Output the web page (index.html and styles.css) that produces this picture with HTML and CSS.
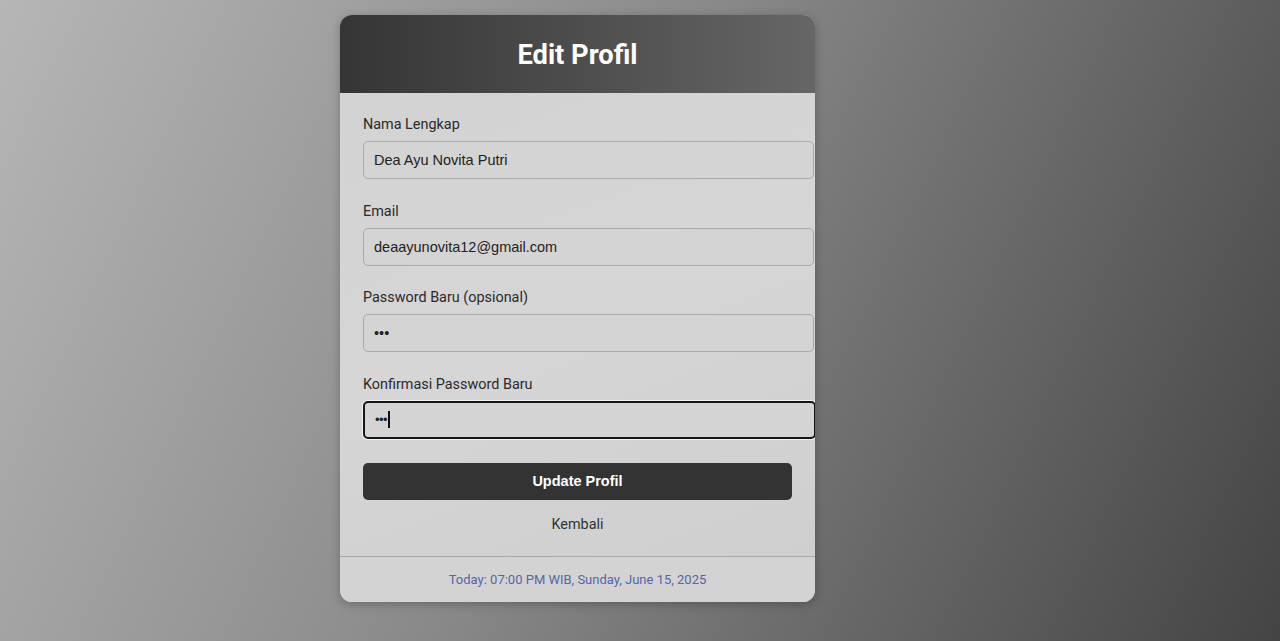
FILE: index.html
```html
<!DOCTYPE html>
<html lang="id">
<head>
<meta charset="utf-8">
<title>Edit Profil</title>
<link rel="stylesheet" href="styles.css">
</head>
<body>
<div class="page">
  <div class="card">
    <div class="card-header">
      <h1 class="title">Edit Profil</h1>
    </div>
    <form class="card-body">
      <div class="group">
        <label class="label">Nama Lengkap</label>
        <input class="input" type="text" value="Dea Ayu Novita Putri">
      </div>
      <div class="group">
        <label class="label">Email</label>
        <input class="input" type="text" value="deaayunovita12@gmail.com">
      </div>
      <div class="group">
        <label class="label">Password Baru (opsional)</label>
        <input class="input" type="password" value="abc">
      </div>
      <div class="group">
        <label class="label">Konfirmasi Password Baru</label>
        <div class="input input-focus"><span class="dots">•••</span><span class="caret"></span></div>
      </div>
      <button class="btn" type="button">Update Profil</button>
      <div class="back">Kembali</div>
    </form>
    <div class="card-footer">Today: 07:00 PM WIB, Sunday, June 15, 2025</div>
  </div>
</div>
</body>
</html>
```
FILE: styles.css
```css
html, body {
  margin: 0;
  padding: 0;
  height: 100%;
}
body {
  background: linear-gradient(115deg, #b6b6b6 0%, #8a8a8a 45%, #444444 100%);
  font-family: Roboto, "Liberation Sans", Arial, sans-serif;
  overflow: hidden;
}
.page {
  padding: 15px 0 0 340px;
}
.card {
  width: 475px;
  border-radius: 12px;
  overflow: hidden;
  background: linear-gradient(160deg, #d2d2d2 0%, #d6d6d6 50%, #cecece 100%);
  box-shadow: 0 2px 10px rgba(0,0,0,0.25);
}
.card-header {
  height: 78px;
  background: linear-gradient(90deg, #353535 0%, #4d4d4d 50%, #666666 100%);
  display: flex;
  align-items: center;
  justify-content: center;
}
.title {
  margin: 0;
  color: #fff;
  font-family: Roboto, sans-serif;
  font-weight: 700;
  font-size: 27.3px;
  padding-top: 1px;
}
.card-body {
  padding: 23px 23px 23px 23px;
  margin: 0;
}
.group {
  margin-bottom: 23.67px;
}
.label {
  display: block;
  font-family: Roboto, sans-serif;
  font-size: 14.4px;
  line-height: 17px;
  color: #2a2a2a;
  margin-bottom: 8px;
}
.input {
  display: block;
  width: 100%;
  height: 16px;
  padding: 10px;
  border: 1px solid #a9a9a9;
  border-radius: 5px;
  background: #d4d4d4;
  font-family: "Liberation Sans", Arial, sans-serif;
  font-size: 14.5px;
  line-height: 16px;
  color: #222;
  margin: 0;
  outline: none;
}
.input-focus {
  border: 2px solid #151515;
  padding: 9px 10px 9px 10px;
  box-shadow: 0 0 0 1px #f2f2f2;
  display: flex;
  align-items: center;
}
.dots {
  font-size: 13px;
  letter-spacing: -0.5px;
  color: #222;
}
.caret {
  display: inline-block;
  width: 1.5px;
  height: 17px;
  background: #111;
  margin-left: 1px;
}
.btn {
  display: block;
  width: 100%;
  height: 37px;
  border: none;
  border-radius: 5px;
  background: #333333;
  color: #fff;
  font-family: "Liberation Sans", Arial, sans-serif;
  font-weight: 700;
  font-size: 14.5px;
  cursor: pointer;
  margin: 0;
}
.back {
  text-align: center;
  font-family: Roboto, sans-serif;
  font-size: 14.4px;
  color: #333;
  margin-top: 16px;
  line-height: 17px;
}
.card-footer {
  border-top: 1px solid #a8a8a8;
  height: 45px;
  display: flex;
  align-items: center;
  justify-content: center;
  font-family: Roboto, sans-serif;
  font-size: 13px;
  color: #5566a8;
  background: #d3d3d3;
}
```
